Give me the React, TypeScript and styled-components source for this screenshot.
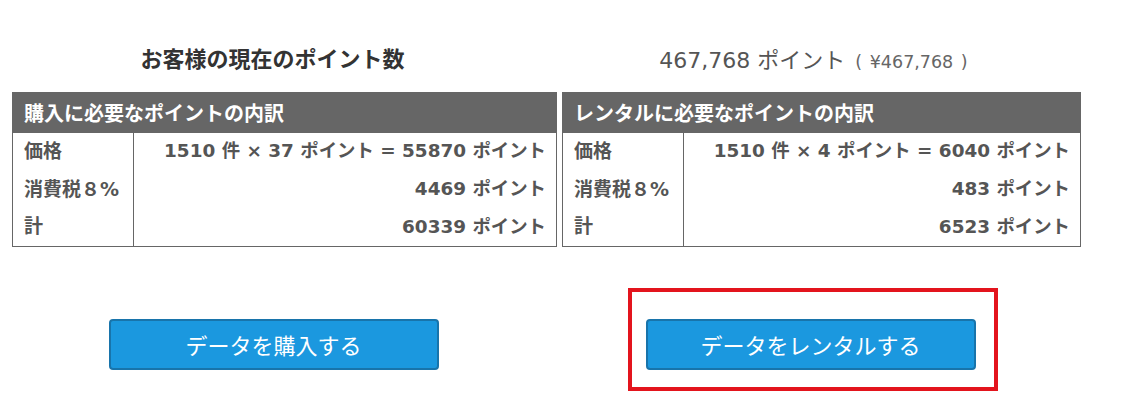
import styled, { createGlobalStyle } from "styled-components";
import { FunctionComponent } from "react";

const GlobalStyle = createGlobalStyle`
  body {
    margin: 0;
    background: #fff;
    font-family: "DejaVu Sans", "Noto Sans CJK JP", sans-serif;
  }
`;

const Root = styled.div`
  width: 1135px;
  height: 413px;
  padding: 40px 0 0 12px;
  box-sizing: border-box;
`;

const Columns = styled.div`
  display: grid;
  grid-template-columns: 545px 519px;
  column-gap: 5px;
`;

const Column = styled.div`
  display: flex;
  flex-direction: column;
`;

const TopRow = styled.div`
  height: 52px;
  display: flex;
  align-items: center;
  justify-content: center;
  padding-right: 24px;
`;

const Title = styled.div`
  font-family: "Noto Sans CJK JP", sans-serif;
  font-weight: 700;
  font-size: 22px;
  color: #333;
  margin-top: -18px;
`;

const Points = styled.div`
  font-size: 22px;
  color: #555;
  margin-top: -16px;
  margin-left: 8px;
`;

const Yen = styled.span`
  font-size: 17.5px;
  color: #666;
  margin-left: 10px;
  word-spacing: 2px;
`;

const Table = styled.table`
  width: 100%;
  border-collapse: collapse;
  font-size: 18.4px;
  color: #555;
`;

const HeaderCell = styled.th`
  background: #666;
  color: #fff;
  text-align: left;
  font-family: "Noto Sans CJK JP", sans-serif;
  font-weight: 700;
  font-size: 20px;
  height: 40px;
  padding: 0 11px;
  box-sizing: border-box;
  border: 1px solid #666;
`;

const LabelCell = styled.td`
  width: 121px;
  height: 38px;
  padding: 0 11px 5px;
  box-sizing: border-box;
  font-weight: 700;
  font-size: 19px;
  border-left: 1px solid #666;
  border-right: 1px solid #666;
  white-space: nowrap;
`;

const ValueCell = styled.td`
  height: 38px;
  padding: 0 10px 5px;
  box-sizing: border-box;
  text-align: right;
  font-weight: 700;
  border-right: 1px solid #666;
  white-space: nowrap;
`;

const Row = styled.tr<{ $last?: boolean }>`
  td {
    border-bottom: ${(p) => (p.$last ? "1px solid #666" : "none")};
  }
`;

const ButtonRow = styled.div`
  height: 102px;
  margin-top: 42px;
  display: flex;
  align-items: center;
  justify-content: center;
  padding-right: 22px;
`;

const ButtonWrap = styled.div`
  position: relative;
  margin-top: 8px;
`;

const Button = styled.button`
  width: 330px;
  height: 51px;
  background: #1b98df;
  border: 2px solid #1874ab;
  border-radius: 4px;
  color: #fff;
  font-family: "Noto Sans CJK JP", sans-serif;
  font-size: 22px;
  font-weight: 400;
  cursor: pointer;
`;

const Highlight = styled.div`
  position: absolute;
  left: -18px;
  right: -22px;
  top: -31px;
  bottom: -21px;
  border: 4px solid #e3141d;
  pointer-events: none;
`;

type Line = { label: string; value: string };

const BreakdownTable: FunctionComponent<{ caption: string; lines: Line[] }> = ({
  caption,
  lines,
}) => (
  <Table>
    <thead>
      <tr>
        <HeaderCell colSpan={2}>{caption}</HeaderCell>
      </tr>
    </thead>
    <tbody>
      {lines.map((l, i) => (
        <Row key={l.label} $last={i === lines.length - 1}>
          <LabelCell>{l.label}</LabelCell>
          <ValueCell>{l.value}</ValueCell>
        </Row>
      ))}
    </tbody>
  </Table>
);

const purchase: Line[] = [
  { label: "価格", value: "1510 件 × 37 ポイント = 55870 ポイント" },
  { label: "消費税８%", value: "4469 ポイント" },
  { label: "計", value: "60339 ポイント" },
];

const rental: Line[] = [
  { label: "価格", value: "1510 件 × 4 ポイント = 6040 ポイント" },
  { label: "消費税８%", value: "483 ポイント" },
  { label: "計", value: "6523 ポイント" },
];

export default function App() {
  return (
    <Root>
      <GlobalStyle />
      <Columns>
        <Column>
          <TopRow>
            <Title>お客様の現在のポイント数</Title>
          </TopRow>
          <BreakdownTable caption="購入に必要なポイントの内訳" lines={purchase} />
          <ButtonRow>
            <ButtonWrap>
              <Button>データを購入する</Button>
            </ButtonWrap>
          </ButtonRow>
        </Column>
        <Column>
          <TopRow>
            <Points>
              467,768 ポイント<Yen>( ¥467,768 )</Yen>
            </Points>
          </TopRow>
          <BreakdownTable caption="レンタルに必要なポイントの内訳" lines={rental} />
          <ButtonRow>
            <ButtonWrap>
              <Button>データをレンタルする</Button>
              <Highlight />
            </ButtonWrap>
          </ButtonRow>
        </Column>
      </Columns>
    </Root>
  );
}
